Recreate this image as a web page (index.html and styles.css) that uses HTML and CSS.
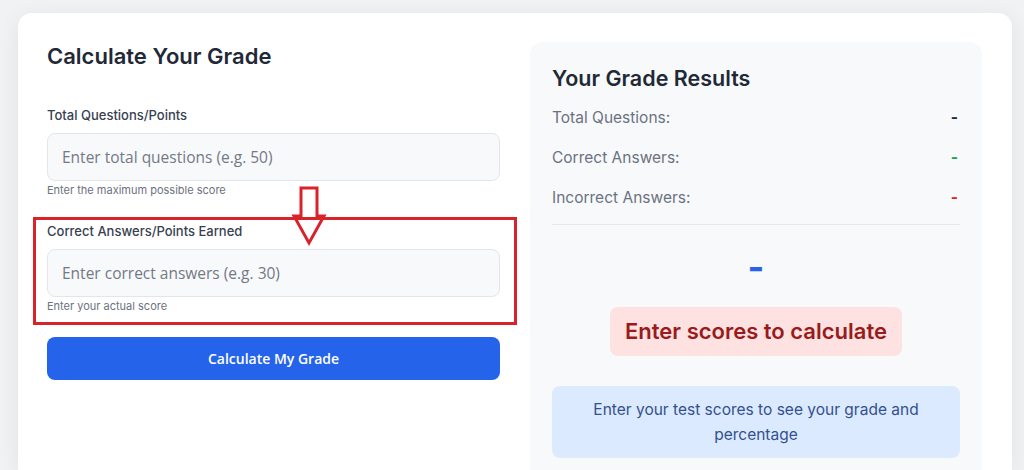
FILE: index.html
```html
<!DOCTYPE html>
<html lang="en">
<head>
<meta charset="utf-8">
<title>Grade Calculator</title>
<link rel="stylesheet" href="styles.css">
</head>
<body>
<div class="card">
  <section class="form-col">
    <h2 class="title">Calculate Your Grade</h2>
    <div class="group">
      <label class="label" for="total">Total Questions/Points</label>
      <input class="input" id="total" type="text" placeholder="Enter total questions (e.g. 50)">
      <div class="hint">Enter the maximum possible score</div>
    </div>
    <div class="group">
      <label class="label" for="correct">Correct Answers/Points Earned</label>
      <input class="input" id="correct" type="text" placeholder="Enter correct answers (e.g. 30)">
      <div class="hint">Enter your actual score</div>
    </div>
    <button class="btn" type="button">Calculate My Grade</button>
    <div class="highlight"></div>
    <svg class="arrow" width="40" height="64" viewBox="0 0 40 64">
      <polygon points="11,2 27,2 27,30 34,30 19,57 4,30 11,30" fill="none" stroke="#d9222a" stroke-width="3" stroke-linejoin="miter"/>
    </svg>
  </section>
  <section class="results">
    <h2 class="results-title">Your Grade Results</h2>
    <div class="row"><span class="row-label">Total Questions:</span><span class="val">-</span></div>
    <div class="row"><span class="row-label">Correct Answers:</span><span class="val green">-</span></div>
    <div class="row"><span class="row-label">Incorrect Answers:</span><span class="val red">-</span></div>
    <div class="divider"></div>
    <div class="big">-</div>
    <div class="badge-wrap"><span class="badge">Enter scores to calculate</span></div>
    <div class="info">Enter your test scores to see your grade and percentage</div>
  </section>
</div>
</body>
</html>
```

FILE: styles.css
```css
* { box-sizing: border-box; }
html, body { margin: 0; padding: 0; }
body {
  background: #f1f2f4;
  font-family: "Inter", "Liberation Sans", sans-serif;
  height: 470px;
  overflow: hidden;
}
.card {
  margin: 13px 12px 0 18px;
  height: 457px;
  overflow: hidden;
  background: #ffffff;
  border-radius: 14px 14px 0 0;
  box-shadow: 0 4px 22px rgba(0, 0, 0, 0.07);
  padding: 29px 29px 0 29px;
  display: grid;
  grid-template-columns: 453px 452px;
  column-gap: 30px;
  align-items: start;
}
.form-col {
  position: relative;
}
.title {
  margin: 0 0 35px 0;
  font-size: 22px;
  line-height: 28px;
  font-weight: 600;
  color: #1f2937;
}
.group { margin-bottom: 24px; }
.label {
  display: block;
  font-size: 13px;
  line-height: 20px;
  font-weight: 500;
  color: #374151;
  margin-bottom: 8px;
}
.input {
  display: block;
  width: 100%;
  height: 48px;
  border: 1px solid #e2e5ea;
  border-radius: 8px;
  background: #f8f9fb;
  padding: 0 14px;
  font-family: "Open Sans", "Noto Sans", sans-serif;
  font-size: 15.5px;
  color: #374151;
  outline: none;
}
.input::placeholder { color: #737a85; }
.hint {
  margin-top: 2px;
  font-size: 11px;
  line-height: 14px;
  color: #6b7280;
}
.btn {
  display: block;
  width: 100%;
  height: 43px;
  border: none;
  border-radius: 8px;
  background: #2563eb;
  color: #ffffff;
  font-family: "Open Sans", "Noto Sans", sans-serif;
  font-size: 14px;
  font-weight: 600;
}
.highlight {
  position: absolute;
  left: -14px;
  top: 175px;
  width: 484px;
  height: 108px;
  border: 3px solid #d9222a;
}
.arrow {
  position: absolute;
  left: 243px;
  top: 144px;
}
.results {
  background: #f8f9fb;
  border-radius: 12px;
  padding: 22px 22px 30px 22px;
  min-height: 440px;
}
.results-title {
  margin: 0 0 6px 0;
  font-size: 21.5px;
  line-height: 28px;
  font-weight: 600;
  color: #1f2937;
}
.row {
  display: flex;
  justify-content: space-between;
  align-items: center;
  padding: 8px 0;
  font-size: 15.5px;
  line-height: 24px;
}
.row-label { color: #6b7280; }
.val { font-weight: 700; color: #1f2937; padding-right: 2px; }
.val.green { color: #16a34a; }
.val.red { color: #dc2626; }
.divider {
  margin-top: 6px;
  height: 1px;
  background: #e5e7eb;
}
.big {
  margin-top: 20px;
  text-align: center;
  font-size: 36px;
  line-height: 44px;
  font-weight: 700;
  color: #2563eb;
}
.badge-wrap {
  margin-top: 18px;
  text-align: center;
}
.badge {
  display: inline-block;
  background: #fee2e2;
  color: #991b1b;
  border-radius: 8px;
  padding: 10px 15px;
  font-size: 22px;
  line-height: 29px;
  font-weight: 600;
}
.info {
  margin-top: 30px;
  background: #dbeafe;
  border-radius: 8px;
  padding: 11px 16px;
  text-align: center;
  font-size: 15.5px;
  line-height: 25px;
  color: #34508f;
}
```
